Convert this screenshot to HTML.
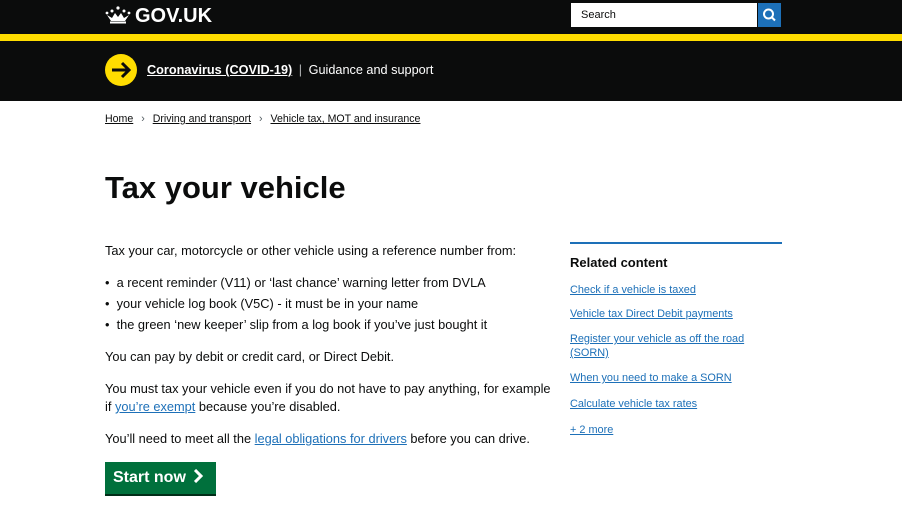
<!DOCTYPE html>
<html><head><style>
*{margin:0;padding:0;box-sizing:border-box}
body{width:902px;height:508px;overflow:hidden;background:#fff;font-family:"Liberation Sans",sans-serif;color:#0b0c0c;position:relative}
.a{position:absolute}
a{color:#1d70b8;text-decoration:underline}
.top{left:0;top:0;width:902px;height:34px;background:#0b0c0c}
.yel{left:0;top:34px;width:902px;height:7px;background:#ffdd00}
.band{left:0;top:41px;width:902px;height:60px;background:#0b0c0c}
p,li{font-size:12.8px;line-height:18px;white-space:nowrap}
.rel a{display:block;font-size:10.9px;line-height:14px;position:absolute;left:0}
</style></head><body>
<div class="a top"></div>
<div class="a yel"></div>
<div class="a band"></div>
<svg class="a" style="left:105px;top:6px" width="26" height="18" viewBox="0 0 26 18"><g fill="#fff"><circle cx="13" cy="2" r="1.6"/><circle cx="7" cy="5" r="1.5"/><circle cx="19" cy="5" r="1.5"/><circle cx="2" cy="7" r="1.4"/><circle cx="24" cy="7" r="1.4"/><path d="M2 9 L6 15 H20 L24 9 L19 12 L16 7 L13 11 L10 7 L7 12 Z"/><rect x="5" y="15.5" width="16" height="2"/></g></svg>
<div class="a" style="left:135px;top:4px;color:#fff;font-weight:bold;font-size:20px;line-height:24px">GOV.UK</div>
<div class="a" style="left:571px;top:3px;width:186px;height:24px;background:#fff;font-size:11px;line-height:24px;padding-left:10px;color:#0b0c0c">Search</div>
<div class="a" style="left:758px;top:3px;width:23px;height:24px;background:#1d70b8"><svg width="23" height="24"><circle cx="10.5" cy="11" r="4.5" stroke="#fff" stroke-width="2" fill="none"/><line x1="14" y1="14.5" x2="17" y2="17.5" stroke="#fff" stroke-width="2"/></svg></div>
<svg class="a" style="left:105px;top:54px" width="32" height="32"><circle cx="16" cy="16" r="16" fill="#ffdd00"/><path d="M7 16 H24 M17 9 L24 16 L17 23" stroke="#0b0c0c" stroke-width="3" fill="none"/></svg>
<div class="a" style="left:147px;top:62px;color:#fff;font-size:12.7px;line-height:17px;white-space:nowrap"><span style="font-weight:bold;text-decoration:underline">Coronavirus (COVID-19)</span> <span style="color:#b1b4b6;margin:0 3px">|</span> Guidance and support</div>
<div class="a" style="left:105px;top:112px;font-size:10.6px;line-height:14px;color:#0b0c0c;white-space:nowrap"><a style="color:#0b0c0c">Home</a> <span style="color:#505a5f;margin:0 5px">›</span> <a style="color:#0b0c0c">Driving and transport</a> <span style="color:#505a5f;margin:0 5px">›</span> <a style="color:#0b0c0c">Vehicle tax, MOT and insurance</a></div>
<h1 class="a" style="left:105px;top:168px;font-size:31px;line-height:40px;font-weight:bold">Tax your vehicle</h1>
<p class="a" style="left:105px;top:242px">Tax your car, motorcycle or other vehicle using a reference number from:</p>
<ul class="a" style="left:105px;top:274px;list-style:none">
<li style="margin-bottom:3px">•&nbsp;&nbsp;a recent reminder (V11) or ‘last chance’ warning letter from DVLA</li>
<li style="margin-bottom:3px">•&nbsp;&nbsp;your vehicle log book (V5C) - it must be in your name</li>
<li>•&nbsp;&nbsp;the green ‘new keeper’ slip from a log book if you’ve just bought it</li></ul>
<p class="a" style="left:105px;top:348px">You can pay by debit or credit card, or Direct Debit.</p>
<p class="a" style="left:105px;top:380px">You must tax your vehicle even if you do not have to pay anything, for example<br>if <a>you’re exempt</a> because you’re disabled.</p>
<p class="a" style="left:105px;top:430px">You’ll need to meet all the <a>legal obligations for drivers</a> before you can drive.</p>
<div class="a" style="left:105px;top:462px;width:111px;height:32px;background:#00703c;box-shadow:0 2px 0 #002d18;color:#fff;font-weight:bold;font-size:16px;line-height:32px;padding-left:8px">Start now <svg width="12" height="14" style="vertical-align:-1px;margin-left:2px"><path d="M3 1 L9 7 L3 13" stroke="#fff" stroke-width="3" fill="none"/></svg></div>
<div class="a" style="left:570px;top:242px;width:212px;height:2px;background:#1d70b8"></div>
<div class="a" style="left:570px;top:255px;font-weight:bold;font-size:13px;line-height:16px">Related content</div>
<div class="a rel" style="left:570px;top:0;width:212px">
<a style="top:283px">Check if a vehicle is taxed</a>
<a style="top:307px">Vehicle tax Direct Debit payments</a>
<a style="top:332px">Register your vehicle as off the road<br>(SORN)</a>
<a style="top:371px">When you need to make a SORN</a>
<a style="top:397px">Calculate vehicle tax rates</a>
<a style="top:423px">+ 2 more</a>
</div>
</body></html>
